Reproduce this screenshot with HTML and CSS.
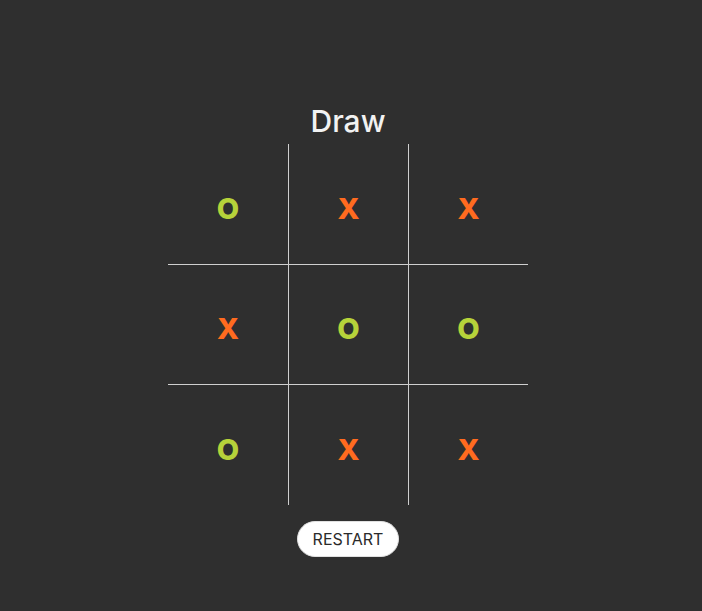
FILE: index.html
```html
<!DOCTYPE html>
<html>
<head>
<meta charset="utf-8">
<link rel="stylesheet" href="styles.css">
</head>
<body>
<main class="game">
  <h1 class="status">Draw</h1>
  <div class="board">
    <div class="cell o">O</div>
    <div class="cell x">X</div>
    <div class="cell x">X</div>
    <div class="cell x">X</div>
    <div class="cell o">O</div>
    <div class="cell o">O</div>
    <div class="cell o">O</div>
    <div class="cell x">X</div>
    <div class="cell x">X</div>
  </div>
  <button class="restart">RESTART</button>
</main>
</body>
</html>
```
FILE: styles.css
```css
html, body {
  margin: 0;
  padding: 0;
  background: #2f2f2f;
  height: 100%;
}
.game {
  display: flex;
  flex-direction: column;
  align-items: center;
  padding: 103px 6px 0 0;
  font-family: Inter, "Liberation Sans", sans-serif;
}
.status {
  margin: 0 0 5px;
  font-size: 30px;
  line-height: 36px;
  font-weight: 500;
  color: #f2f2f2;
}
.board {
  display: grid;
  grid-template-columns: repeat(3, 120px);
  grid-template-rows: 120px 120px 121px;
}
.cell {
  box-sizing: border-box;
  display: flex;
  align-items: center;
  justify-content: center;
  padding-top: 8px;
  font-size: 29px;
  font-weight: 800;
  border-left: 1px solid #cfcfcf;
  border-top: 1px solid #cfcfcf;
}
.cell:nth-child(3n+1) { border-left: none; }
.cell:nth-child(-n+3) { border-top: none; }
.cell.o { color: #b6d23a; }
.cell.x { color: #ff6b1f; }
.restart {
  margin-top: 16px;
  height: 36px;
  padding: 0 15px;
  border: 1px solid #e0e0e0;
  border-radius: 18px;
  background: #ffffff;
  color: #2a2a2a;
  font-family: Inter, "Liberation Sans", sans-serif;
  font-size: 16px;
  font-weight: 400;
}
```
